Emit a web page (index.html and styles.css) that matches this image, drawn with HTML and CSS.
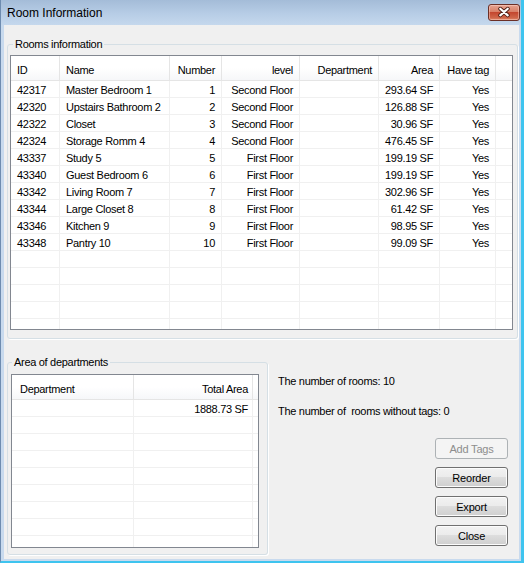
FILE: index.html
```html
<!DOCTYPE html>
<html>
<head>
<meta charset="utf-8">
<title>Room Information</title>
<link rel="stylesheet" href="styles.css">
</head>
<body>
<div class="window">
  <div class="titlebar">
    <span class="title">Room Information</span>
    <button class="close-btn" aria-label="Close">
      <svg width="32" height="17" viewBox="0 0 32 17">
        <path d="M12 4.5 L20 11.5 M20 4.5 L12 11.5" stroke="#4a1a12" stroke-width="4.2" stroke-linecap="round" fill="none"/>
        <path d="M12 4.5 L20 11.5 M20 4.5 L12 11.5" stroke="#ffffff" stroke-width="2.4" stroke-linecap="round" fill="none"/>
      </svg>
    </button>
  </div>
  <div class="client">
    <fieldset class="group rooms-group">
      <legend>Rooms information</legend>
      <div class="listview rooms-list">
        <div class="lv-head">
          <div>ID</div><div>Name</div><div class="r">Number</div><div class="r">level</div><div class="r">Department</div><div class="r">Area</div><div class="r">Have tag</div><div class="filler"></div>
        </div>
        <div class="lv-row"><div>42317</div><div>Master Bedroom 1</div><div class="r">1</div><div class="r">Second Floor</div><div></div><div class="r">293.64 SF</div><div class="r">Yes</div><div class="filler"></div></div>
        <div class="lv-row"><div>42320</div><div>Upstairs Bathroom 2</div><div class="r">2</div><div class="r">Second Floor</div><div></div><div class="r">126.88 SF</div><div class="r">Yes</div><div class="filler"></div></div>
        <div class="lv-row"><div>42322</div><div>Closet</div><div class="r">3</div><div class="r">Second Floor</div><div></div><div class="r">30.96 SF</div><div class="r">Yes</div><div class="filler"></div></div>
        <div class="lv-row"><div>42324</div><div>Storage Romm 4</div><div class="r">4</div><div class="r">Second Floor</div><div></div><div class="r">476.45 SF</div><div class="r">Yes</div><div class="filler"></div></div>
        <div class="lv-row"><div>43337</div><div>Study 5</div><div class="r">5</div><div class="r">First Floor</div><div></div><div class="r">199.19 SF</div><div class="r">Yes</div><div class="filler"></div></div>
        <div class="lv-row"><div>43340</div><div>Guest Bedroom 6</div><div class="r">6</div><div class="r">First Floor</div><div></div><div class="r">199.19 SF</div><div class="r">Yes</div><div class="filler"></div></div>
        <div class="lv-row"><div>43342</div><div>Living Room 7</div><div class="r">7</div><div class="r">First Floor</div><div></div><div class="r">302.96 SF</div><div class="r">Yes</div><div class="filler"></div></div>
        <div class="lv-row"><div>43344</div><div>Large Closet 8</div><div class="r">8</div><div class="r">First Floor</div><div></div><div class="r">61.42 SF</div><div class="r">Yes</div><div class="filler"></div></div>
        <div class="lv-row"><div>43346</div><div>Kitchen 9</div><div class="r">9</div><div class="r">First Floor</div><div></div><div class="r">98.95 SF</div><div class="r">Yes</div><div class="filler"></div></div>
        <div class="lv-row"><div>43348</div><div>Pantry 10</div><div class="r">10</div><div class="r">First Floor</div><div></div><div class="r">99.09 SF</div><div class="r">Yes</div><div class="filler"></div></div>
        <div class="lv-row"><div></div><div></div><div></div><div></div><div></div><div></div><div></div><div class="filler"></div></div>
        <div class="lv-row"><div></div><div></div><div></div><div></div><div></div><div></div><div></div><div class="filler"></div></div>
        <div class="lv-row"><div></div><div></div><div></div><div></div><div></div><div></div><div></div><div class="filler"></div></div>
        <div class="lv-row"><div></div><div></div><div></div><div></div><div></div><div></div><div></div><div class="filler"></div></div>
        <div class="lv-row"><div></div><div></div><div></div><div></div><div></div><div></div><div></div><div class="filler"></div></div>
      </div>
    </fieldset>

    <div class="bottom">
      <fieldset class="group dept-group">
        <legend>Area of departments</legend>
        <div class="listview dept-list">
          <div class="lv-head">
            <div class="first">Department</div><div class="r">Total Area</div><div class="filler"></div>
          </div>
          <div class="lv-row"><div></div><div class="r">1888.73 SF</div><div class="filler"></div></div>
          <div class="lv-row"><div></div><div></div><div class="filler"></div></div>
          <div class="lv-row"><div></div><div></div><div class="filler"></div></div>
          <div class="lv-row"><div></div><div></div><div class="filler"></div></div>
          <div class="lv-row"><div></div><div></div><div class="filler"></div></div>
          <div class="lv-row"><div></div><div></div><div class="filler"></div></div>
          <div class="lv-row"><div></div><div></div><div class="filler"></div></div>
          <div class="lv-row"><div></div><div></div><div class="filler"></div></div>
          <div class="lv-row"><div></div><div></div><div class="filler"></div></div>
        </div>
      </fieldset>

      <div class="side">
        <p class="stat">The number of rooms: 10</p>
        <p class="stat">The number of&nbsp; rooms without tags: 0</p>
        <div class="buttons">
          <button class="btn" disabled>Add Tags</button>
          <button class="btn">Reorder</button>
          <button class="btn">Export</button>
          <button class="btn">Close</button>
        </div>
      </div>
    </div>
  </div>
</div>
</body>
</html>
```

FILE: styles.css
```css
* { box-sizing: border-box; }

html, body {
  margin: 0;
  padding: 0;
}

body {
  width: 524px;
  height: 563px;
  overflow: hidden;
  font-family: "Liberation Sans", Arial, sans-serif;
  font-size: 11px;
  letter-spacing: -0.3px;
  color: #000;
  background: #f0f0f0;
}

.window {
  width: 524px;
  height: 563px;
  display: flex;
  flex-direction: column;
  background: #c8daee;
  border-left: 1px solid #6e8cb0;
  border-right: 3px solid #3ec4ef;
  border-bottom: 2px solid #3ec4ef;
}

.titlebar {
  height: 25px;
  flex: none;
  display: flex;
  align-items: center;
  justify-content: space-between;
  padding: 1px 1px 0 6px;
  background: linear-gradient(#a4bcd8, #b7cde6 55%, #c5d8ed);
}

.title {
  font-size: 12px;
  letter-spacing: 0;
  color: #000;
}

.close-btn {
  width: 32px;
  height: 17px;
  padding: 0;
  margin: -1px 0 0 0;
  border: 1px solid #6b2f26;
  border-radius: 3px;
  background: linear-gradient(#e6a392, #d88067 45%, #c4472f 50%, #cf6649 85%, #e0896b);
  box-shadow: inset 0 0 0 1px rgba(255, 220, 210, 0.45);
  display: flex;
  align-items: center;
  justify-content: center;
}

.close-btn svg { display: block; }

.client {
  flex: 1;
  margin: 0 2px 2px 3px;
  background: #f0f0f0;
  padding: 12px 0 0 0;
  display: flex;
  flex-direction: column;
}

.group {
  margin: 0;
  border: 1px solid #d5dfe5;
  border-radius: 3px;
  min-width: 0;
  box-shadow: 1px 1px 0 #ffffff;
}

.group legend {
  padding: 0 2px;
  line-height: 14px;
  font-size: 11px;
}

.rooms-group {
  width: 511px;
  margin-left: 3px;
  padding: 4px 4px 8px 2px;
}

.rooms-group legend { margin-left: 3px; }

.listview {
  border: 1px solid #828790;
  background: #fff;
  overflow: hidden;
}

.rooms-list {
  width: 503px;
  height: 275px;
}

.lv-head {
  display: grid;
  height: 25px;
  border-bottom: 1px solid #e5e5e5;
  background: linear-gradient(#ffffff, #ffffff 50%, #f6f7f9);
}

.lv-head > div {
  border-right: 1px solid #e5e5e5;
  padding: 2px 6px 0;
  line-height: 24px;
  white-space: nowrap;
  overflow: hidden;
}

.lv-row {
  display: grid;
  height: 17px;
}

.lv-row > div {
  border-right: 1px solid #f0f0f0;
  border-bottom: 1px solid #f0f0f0;
  padding: 2px 6px 0;
  line-height: 15px;
  white-space: nowrap;
  overflow: hidden;
}

.lv-head > .filler,
.lv-row > .filler {
  border-right: none;
  padding: 0;
}

.r { text-align: right; }

.rooms-list .lv-head,
.rooms-list .lv-row {
  grid-template-columns: 49px 110px 52px 78px 79px 61px 56px 16px;
}

.bottom {
  display: flex;
  margin-top: 16px;
}

.dept-group {
  width: 261px;
  flex: none;
  margin-left: 3px;
  padding: 5px 8px 6px 3px;
}

.dept-group legend { margin-left: 1px; }

.dept-list {
  width: 248px;
  height: 174px;
}

.dept-list .lv-head,
.dept-list .lv-row {
  grid-template-columns: 122px 119px 5px;
}

.dept-list .lv-head > .first { padding-left: 8px; }
.dept-list .r { padding-right: 4px; }

.side {
  flex: 1;
  margin-left: 10px;
  padding: 20px 11px 0 0;
  display: flex;
  flex-direction: column;
}

.stat {
  margin: 0 0 17px;
  line-height: 13px;
  white-space: pre;
}

.buttons {
  display: flex;
  flex-direction: column;
  align-items: flex-end;
  gap: 8px;
  margin-top: 3px;
}

.btn {
  width: 73px;
  height: 21px;
  margin: 0;
  padding: 0;
  font-family: "Liberation Sans", Arial, sans-serif;
  font-size: 11px;
  letter-spacing: -0.2px;
  color: #000;
  border: 1px solid #707070;
  border-radius: 3px;
  background: linear-gradient(#f2f2f2, #ebebeb 50%, #dddddd 50%, #cfcfcf);
  box-shadow: inset 0 0 0 1px #fcfcfc;
}

.btn:disabled {
  color: #8d8d8d;
  border-color: #adb2b5;
  background: #f4f4f4;
  box-shadow: none;
}
```
